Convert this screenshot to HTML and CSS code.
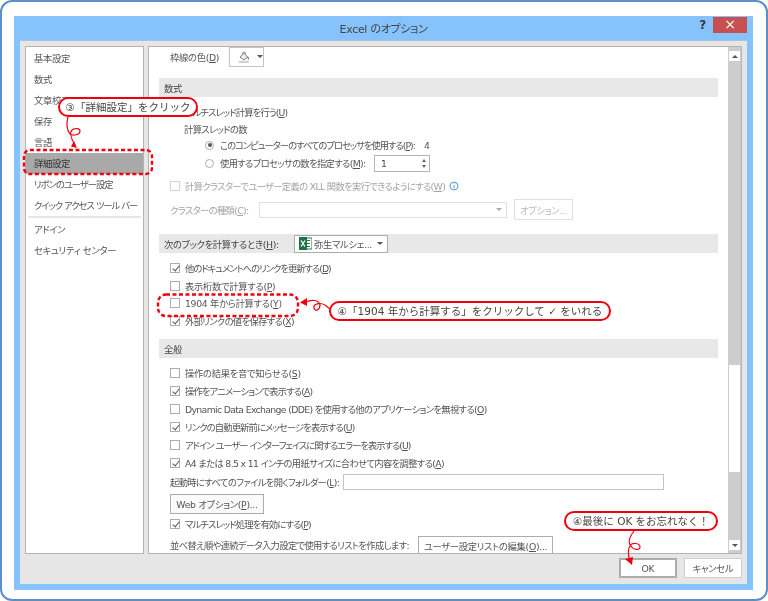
FILE: index.html
```html
<!DOCTYPE html>
<html lang="ja">
<head>
  <meta charset="UTF-8" />
  <title>Excel のオプション</title>
  <link rel="stylesheet" href="styles.css">
</head>
<body>
  <div class="frame">
    <div class="window">
      <!-- Title bar -->
      <div class="titlebar">
        <span class="title">Excel のオプション</span>
        <span class="help">?</span>
        <span class="close">×</span>
      </div>

      <div class="client">
        <div class="panels">
          <!-- Left nav -->
          <ul class="nav">
            <li>基本設定</li>
            <li>数式</li>
            <li>文章校正</li>
            <li>保存</li>
            <li>言語</li>
            <li class="selected">詳細設定</li>
            <li class="ls-c">リボンのユーザー設定</li>
            <li class="ls-c">クイック アクセス ツール バー</li>
            <li class="sep"></li>
            <li>アドイン</li>
            <li>セキュリティ センター</li>
          </ul>

          <!-- Options pane -->
          <div class="pane">
            <div class="content">
              <div class="row border-row">
                <span class="border-label">枠線の色(<u>D</u>)</span>
                <span class="color-btn">
                  <svg width="20" height="14" viewBox="0 0 20 14">
                    <path d="M3.500 7 L8 2.500 L12.500 7 L8 10.500 Z" fill="#eee" stroke="#666" stroke-width="1"/>
                    <path d="M6.500 3 C6.500 0.500 10 0.500 10 3.500" fill="none" stroke="#666" stroke-width="1"/>
                    <path d="M12.500 6.500 C14.500 7.500 14.500 10 13.500 10.500 C12.500 10 12 8 12.500 6.500 Z" fill="#3f86c8"/>
                    <rect x="2" y="11.500" width="12" height="2.500" fill="#d0d0d0"/>
                  </svg>
                  <i class="caret"></i>
                </span>
              </div>

              <h3 class="section s-formula">数式</h3>
              <div class="row s-multi ls-b"><i class="check on"></i><span>マルチスレッド計算を行う(<u>U</u>)</span></div>
              <div class="row indent1 s-count ls-a">計算スレッドの数</div>
              <div class="row indent2 s-radio1"><i class="radio on"></i><span class="ls-c">このコンピューターのすべてのプロセッサを使用する(<u>P</u>):</span><span class="num">4</span></div>
              <div class="row indent2">
                <i class="radio"></i><span class="count-label ls-a">使用するプロセッサの数を指定する(<u>M</u>):</span>
                <span class="spinner">1<i class="spin-up"></i><i class="spin-down"></i></span>
              </div>
              <div class="row disabled s-cluster">
                <i class="check"></i><span class="ls-a">計算クラスターでユーザー定義の XLL 関数を実行できるようにする(<u>W</u>)</span>
                <svg class="info" width="10" height="10" viewBox="0 0 10 10">
                  <circle cx="5" cy="5" r="4" fill="#fff" stroke="#5b9bd5"/>
                  <rect x="4.500" y="4" width="1" height="3.500" fill="#5b9bd5"/>
                  <rect x="4.500" y="2.200" width="1" height="1" fill="#5b9bd5"/>
                </svg>
              </div>
              <div class="row disabled cluster-type">
                <span class="cluster-label ls-a">クラスターの種類(<u>C</u>):</span>
                <span class="cluster-select"><i class="caret light"></i></span>
                <span class="btn opt-btn">オプション...</span>
              </div>

              <h3 class="section s-book">
                <span class="book-label">次のブックを計算するとき(<u>H</u>):</span>
                <span class="book-select">
                  <svg width="13" height="13" viewBox="0 0 13 13">
                    <rect x="6" y="1" width="7" height="11" fill="#fff" stroke="#2a7d46"/>
                    <path d="M8 3.500h3M8 6.500h3M8 9.500h3" stroke="#2a7d46"/>
                    <rect x="0" y="0" width="8" height="13" fill="#1f7246"/>
                    <path d="M2 3.500 L6 9.500 M6 3.500 L2 9.500" stroke="#fff" stroke-width="1.300"/>
                  </svg>
                  <span>弥生マルシェ...</span>
                  <i class="caret"></i>
                </span>
              </h3>
              <div class="row s-first tight"><i class="check on"></i><span class="ls-c">他のドキュメントへのリンクを更新する(<u>D</u>)</span></div>
              <div class="row tight"><i class="check"></i><span>表示桁数で計算する(<u>P</u>)</span></div>
              <div class="row tight"><i class="check"></i><span>1904 年から計算する(<u>Y</u>)</span></div>
              <div class="row tight"><i class="check on"></i><span class="ls-a">外部リンクの値を保存する(<u>X</u>)</span></div>

              <h3 class="section s-general">全般</h3>
              <div class="row s-first"><i class="check"></i><span>操作の結果を音で知らせる(<u>S</u>)</span></div>
              <div class="row"><i class="check on"></i><span class="ls-b">操作をアニメーションで表示する(<u>A</u>)</span></div>
              <div class="row"><i class="check"></i><span class="ls-a">Dynamic Data Exchange (DDE) を使用する他のアプリケーションを無視する(<u>O</u>)</span></div>
              <div class="row"><i class="check on"></i><span class="ls-b">リンクの自動更新前にメッセージを表示する(<u>U</u>)</span></div>
              <div class="row"><i class="check"></i><span class="ls-c">アドイン ユーザー インターフェイスに関するエラーを表示する(<u>U</u>)</span></div>
              <div class="row"><i class="check on"></i><span class="ls-a">A4 または 8.5 x 11 インチの用紙サイズに合わせて内容を調整する(<u>A</u>)</span></div>
              <div class="row s-folder"><span class="folder-label ls-a">起動時にすべてのファイルを開くフォルダー(<u>L</u>):</span><span class="folder-input"></span></div>
              <div class="s-web"><span class="btn web-btn">Web オプション(<u>P</u>)...</span></div>
              <div class="row s-mt"><i class="check on"></i><span class="ls-b">マルチスレッド処理を有効にする(<u>P</u>)</span></div>
              <div class="row s-sort"><span class="sort-label ls-a">並べ替え順や連続データ入力設定で使用するリストを作成します:</span><span class="btn list-btn">ユーザー設定リストの編集(<u>O</u>)...</span></div>
            </div>

            <!-- Scrollbar -->
            <div class="scrollbar">
              <span class="sb-btn"><i class="sb-up"></i></span>
              <span class="sb-thumb"></span>
              <span class="sb-btn"><i class="sb-down"></i></span>
            </div>
          </div>
        </div>

        <div class="footer">
          <span class="btn ok-btn">OK</span>
          <span class="btn cancel-btn">キャンセル</span>
        </div>
      </div>
    </div>

    <!-- Red annotations over the dialog -->
    <svg class="marks" width="768" height="601" viewBox="0 0 768 601">
      <g fill="none" stroke="#f0000f" stroke-width="2.400" stroke-dasharray="4 2.500">
        <rect x="24" y="150" width="128" height="24" rx="6"/>
        <rect x="158" y="294.500" width="140" height="21.500" rx="8"/>
      </g>
      <g fill="none" stroke="#f0000f" stroke-width="1.200">
        <path d="M68 117 C66 124 67 130 70 134 C73 136 80 135 80 131 C80 128 74 128 72 130 C69 133 72 140 75 145"/>
        <path d="M306 302 C312 299 319 300 320 305 C320 310 315 312 314 308 C313 304 320 302 325 305 L330 309"/>
        <path d="M634 531 C630 536 628 541 630 545 C633 550 640 551 640 547 C640 543 632 542 630 546 C627 550 629 555 629 559"/>
      </g>
      <g fill="#f0000f">
        <path d="M77 148 L71 146.500 L74 141 Z"/>
        <path d="M300 302.500 L307 298 L307 306 Z"/>
        <path d="M625 559 L633 557 L632 565 Z"/>
      </g>
    </svg>

    <div class="callout c-step3">③「詳細設定」をクリック</div>
    <div class="callout c-step4">④「1904 年から計算する」をクリックして ✓ をいれる</div>
    <div class="callout c-ok">④最後に OK をお忘れなく！</div>
  </div>
</body>
</html>
```

FILE: styles.css
```css
* {
  margin: 0;
  padding: 0;
  box-sizing: border-box;
}

body {
  background: #fff;
  font-family: "DejaVu Sans", "Noto Sans CJK JP", sans-serif;
  font-size: 9.300px;
  letter-spacing: -0.3px;
  color: #555;
  overflow: hidden;
}

i {
  display: inline-block;
  font-style: normal;
}

.ls-a { letter-spacing: -0.65px; }
.ls-b { letter-spacing: -0.85px; }
.ls-c { letter-spacing: -1px; }

/* Outer rounded frame of the picture */
.frame {
  position: relative;
  width: 768px;
  height: 601px;
  padding: 14px 12px 9px 12px;
  background: #fff;
  border: 2px solid #5d8fc6;
  border-radius: 12px;
  font-feature-settings: "palt";
  filter: blur(0.35px);
}

/* Dialog window */
.window {
  display: flex;
  flex-direction: column;
  width: 739px;
  height: 574px;
  background: #86c3fd;
  padding: 0 6px 6px;
}

.titlebar {
  position: relative;
  display: flex;
  justify-content: center;
  height: 24px;
  flex: none;
}
.title {
  font-size: 11px;
  line-height: 27px;
  color: #444;
}
.help {
  position: absolute;
  right: 41px;
  top: 0;
  font-size: 12px;
  font-weight: 700;
  line-height: 18px;
  color: #333;
}
.close {
  position: absolute;
  right: 0;
  top: 1px;
  width: 34px;
  height: 16px;
  background: #c75050;
  color: #fff;
  text-align: center;
  font-size: 14px;
  line-height: 15px;
}

.client {
  display: flex;
  flex-direction: column;
  flex: 1;
  background: #e6e6e6;
  padding: 5px 5px 6px;
  border-top: 1px solid #a8c4dc;
}

.panels {
  display: flex;
  gap: 4px;
  height: 508px;
  flex: none;
}

/* Left nav */
.nav {
  width: 119px;
  flex: none;
  list-style: none;
  background: #fff;
  border: 1px solid #b4b4b4;
  padding-top: 1px;
}
.nav li {
  height: 21px;
  line-height: 21px;
  padding-left: 8px;
  white-space: nowrap;
}
.nav li.selected {
  background: #a9a9a9;
  color: #333;
}
.nav li.sep {
  height: 2px;
  margin: 0 2px 1px;
  background: #e6e6e6;
}

/* Options pane */
.pane {
  display: flex;
  flex: 1;
  background: #fff;
  border: 1px solid #b4b4b4;
  overflow: hidden;
}
.content {
  flex: 1;
  padding-left: 10px;
  min-width: 0;
  overflow: hidden;
}

.row {
  display: flex;
  align-items: center;
  height: 18px;
  padding-left: 11px;
  white-space: nowrap;
}
.row.tight { height: 17.700px; }

.section {
  display: flex;
  align-items: center;
  width: 559px;
  height: 19px;
  background: #e8e8e8;
  padding-left: 5px;
  font-size: 9.300px;
  font-weight: 400;
  color: #444;
}

/* Vertical spacing of the groups */
.border-row { height: 20px; }
.s-formula { margin-top: 11px; }
.s-multi { margin-top: 6px; }
.row.s-count { height: 15px; }
.s-cluster { margin-top: 5px; }
.row.cluster-type { margin-top: 4px; height: 21px; }
.s-book { margin-top: 14px; }
.s-first { margin-top: 6px; }
.s-general { margin-top: 9.300px; }
.row.s-folder { margin-top: 2px; height: 16px; }
.s-web { margin-top: 4px; padding-left: 11px; height: 20px; }
.s-mt { margin-top: 1px; }
.s-sort { margin-top: 3px; }

.indent1 { padding-left: 25px; }
.indent2 { padding-left: 46px; }

/* Fixed label widths, so the controls line up beside them */
.border-label { width: 59px; flex: none; }
.count-label { width: 154px; flex: none; }
.cluster-label { width: 89px; flex: none; }
.book-label { width: 130px; flex: none; }
.folder-label { width: 173px; flex: none; }
.sort-label { width: 248px; flex: none; }

.disabled { color: #a4a4a4; }
.disabled .check { border-color: #d4d4d4; }

.check {
  position: relative;
  width: 10px;
  height: 10px;
  flex: none;
  margin-right: 5px;
  background: #fff;
  border: 1px solid #adadad;
}
.check.on::after {
  content: "";
  position: absolute;
  left: 2.500px;
  top: 0;
  width: 3px;
  height: 6px;
  border: solid #555;
  border-width: 0 1px 1px 0;
  transform: rotate(40deg);
}

.radio {
  position: relative;
  width: 9px;
  height: 9px;
  flex: none;
  margin-right: 6px;
  background: #fff;
  border: 1px solid #adadad;
  border-radius: 50%;
}
.radio.on::after {
  content: "";
  position: absolute;
  left: 1.500px;
  top: 1.500px;
  width: 4px;
  height: 4px;
  background: #555;
  border-radius: 50%;
}
.num { margin-left: 9px; }

.spinner {
  position: relative;
  width: 56px;
  height: 17px;
  padding-left: 6px;
  line-height: 16px;
  border: 1px solid #b4b4b4;
  color: #444;
}
.spin-up, .spin-down {
  position: absolute;
  right: 3px;
  border-left: 2.500px solid transparent;
  border-right: 2.500px solid transparent;
}
.spin-up { top: 3px; border-bottom: 3px solid #666; }
.spin-down { top: 9px; border-top: 3px solid #666; }

.caret {
  width: 0;
  height: 0;
  border-left: 3px solid transparent;
  border-right: 3px solid transparent;
  border-top: 3px solid #555;
}
.caret.light { border-top-color: #aaa; }

.color-btn {
  display: flex;
  align-items: center;
  gap: 3px;
  width: 35px;
  height: 20px;
  margin-top: -1px;
  padding-left: 7px;
  border: 1px solid #c4c4c4;
}

.info { margin-left: 4px; }

.cluster-select {
  display: flex;
  align-items: center;
  justify-content: flex-end;
  width: 248px;
  height: 16px;
  padding-right: 4px;
  border: 1px solid #e0e0e0;
}

.btn {
  display: inline-flex;
  align-items: center;
  justify-content: center;
  background: #fff;
  border: 1px solid #adadad;
  color: #555;
  white-space: nowrap;
}
.opt-btn {
  width: 59px;
  height: 21px;
  margin-left: 7px;
  border-color: #e0e0e0;
  color: #b8b8b8;
}
.web-btn {
  width: 94px;
  height: 20px;
  background: #fafafa;
}
.list-btn {
  width: 135px;
  height: 20px;
  margin-top: 2px;
}

.book-select {
  display: flex;
  align-items: center;
  gap: 2px;
  width: 94px;
  height: 18px;
  padding-left: 4px;
  background: #fff;
  border: 1px solid #adadad;
  color: #555;
  white-space: nowrap;
}
.book-select .caret { margin-left: auto; margin-right: 4px; }

.folder-input {
  width: 321px;
  height: 16px;
  border: 1px solid #c4c4c4;
}

/* Scrollbar */
.scrollbar {
  display: flex;
  flex-direction: column;
  align-items: center;
  width: 13px;
  flex: none;
  padding: 4px 0 3px;
  background: #cdcdcd;
}
.sb-btn {
  display: flex;
  align-items: center;
  justify-content: center;
  width: 11px;
  height: 10px;
  background: #fff;
}
.sb-up, .sb-down {
  border-left: 3px solid transparent;
  border-right: 3px solid transparent;
}
.sb-up { border-bottom: 3px solid #555; }
.sb-down { border-top: 3px solid #555; }
.sb-thumb {
  width: 11px;
  height: 107px;
  margin-top: 304px;
  margin-bottom: auto;
  background: #fff;
}

/* Bottom buttons */
.footer {
  display: flex;
  justify-content: flex-end;
  gap: 7px;
  margin-top: 4px;
}
.ok-btn, .cancel-btn {
  height: 20px;
}
.ok-btn {
  width: 58px;
  border: 2px solid #adadad;
}
.cancel-btn {
  width: 58px;
  border-color: #d0d0d0;
}

/* Annotations */
.marks {
  position: absolute;
  left: -2px;
  top: -2px;
  pointer-events: none;
}
.callout {
  position: absolute;
  height: 20px;
  background: #fff;
  border: 2px solid #f0000f;
  border-radius: 10px;
  font-size: 10.500px;
  letter-spacing: 0;
  line-height: 17px;
  color: #444;
  text-align: center;
  white-space: nowrap;
  font-feature-settings: normal;
}
.c-step3 { left: 56px; top: 95px; width: 140px; }
.c-step4 { left: 327px; top: 299px; width: 282px; }
.c-ok { left: 562px; top: 509px; width: 154px; }
```
